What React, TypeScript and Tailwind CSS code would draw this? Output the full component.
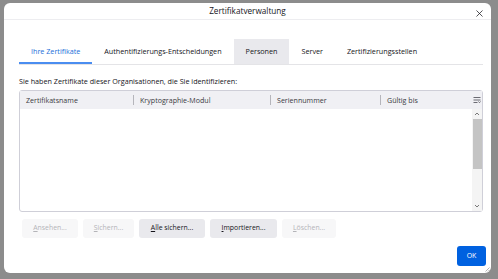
import { X } from "lucide-react";

const tabs = [
  "Ihre Zertifikate",
  "Authentifizierungs-Entscheidungen",
  "Personen",
  "Server",
  "Zertifizierungsstellen",
];

const columns = [
  { label: "Zertifikatsname", w: "w-[113px]" },
  { label: "Kryptographie-Modul", w: "w-[137px]" },
  { label: "Seriennummer", w: "w-[110px]" },
  { label: "Gültig bis", w: "flex-1" },
];

const buttons = [
  { key: "A", rest: "nsehen...", w: "w-[56px]", on: false },
  { key: "S", rest: "ichern...", w: "w-[51px]", on: false },
  { key: "A", rest: "lle sichern...", w: "w-[66px]", on: true },
  { key: "I", rest: "mportieren...", w: "w-[67px]", on: true },
  { key: "L", rest: "öschen...", w: "w-[54px]", on: false },
];

const ColumnPicker = () => (
  <svg width="8" height="8" viewBox="0 0 8 8" fill="none" stroke="#6b6b73" strokeWidth="1">
    <path d="M0.5 1.5h7M0.5 4h7M0.5 6.5h4" />
    <path d="M5.5 5.5l1 1.2 1-1.2" />
  </svg>
);

const App = () => {
  return (
    <div className="flex h-[279px] w-[498px] bg-[#8c8c8c] pb-[6px] pl-[4px] pr-[7px] pt-[3px] font-['Open_Sans',sans-serif] text-[#15141a]">
      <div className="flex flex-1 flex-col rounded-[6px] bg-white">
        <header className="relative flex h-[22px] items-center justify-center border-b border-[#ededf0] pt-[1px]">
          <span className="text-[8.2px]">Zertifikatverwaltung</span>
          <X className="absolute right-[6px] top-[5px] h-[11px] w-[11px]" strokeWidth={1.6} />
        </header>

        <div className="flex flex-1 flex-col pl-[15px] pr-[8px] pt-[19px]">
          <nav className="flex h-[26px] border-b border-[#e4e4e7] text-[7.2px]">
            {tabs.map((t, i) => (
              <div
                key={t}
                className={
                  "flex items-center px-[12px] " +
                  (i === 0
                    ? "border-b-2 border-[#4a8df0] pt-[2px] text-[#1a6fd9]"
                    : i === 2
                      ? "bg-[#e9e9ed]"
                      : "")
                }
              >
                {t}
              </div>
            ))}
          </nav>

          <p className="mt-[11px] text-[7.2px] leading-[10px]">
            Sie haben Zertifikate dieser Organisationen, die Sie identifizieren:
          </p>

          <div className="mt-[4px] flex h-[122px] flex-col rounded-[3px] border border-[#cfcfd8]">
            <div className="flex h-[18px] items-center bg-[#f0f0f4] text-[7.1px] text-[#3b3b3f]">
              {columns.map((c, i) => (
                <div key={c.label} className={"flex h-full items-center " + c.w}>
                  {i > 0 && <span className="mr-[6px] h-[10px] w-px bg-[#b5b5bb]" />}
                  <span className={i === 0 ? "pl-[6px]" : ""}>{c.label}</span>
                </div>
              ))}
              <div className="flex w-[11px] items-center justify-center">
                <ColumnPicker />
              </div>
            </div>
            <div className="flex flex-1">
              <div className="flex-1" />
              <div className="flex w-[10px] flex-col items-center bg-[#f4f4f4]">
                <svg width="6" height="8" viewBox="0 0 6 8" className="mt-[1px]">
                  <path d="M1 5l2-2 2 2" fill="none" stroke="#6b6b6b" strokeWidth="0.9" />
                </svg>
                <div className="mt-[1px] h-[50px] w-[9px] bg-[#c4c4c4]" />
                <div className="flex-1" />
                <svg width="6" height="8" viewBox="0 0 6 8" className="mb-[1px]">
                  <path d="M1 3l2 2 2-2" fill="none" stroke="#6b6b6b" strokeWidth="0.9" />
                </svg>
              </div>
            </div>
          </div>

          <div className="mt-[7px] flex gap-[5px] pl-[3px]">
            {buttons.map((b, i) => (
              <div
                key={i}
                className={
                  "flex h-[19px] items-center justify-center rounded-[3px] text-[6.9px] " +
                  b.w +
                  (b.on ? " bg-[#e9e9ed] text-[#15141a]" : " bg-[#f7f7f8] text-[#b4b4b8]")
                }
              >
                <span>
                  <u>{b.key}</u>
                  {b.rest}
                </span>
              </div>
            ))}
          </div>

          <div className="mt-[8px] flex justify-end">
            <div className="-mr-[3px] flex h-[20px] w-[29px] items-center justify-center rounded-[3px] bg-[#0061e0] text-[7px] text-white">
              OK
            </div>
          </div>
          <div className="flex flex-1 justify-end">
            <svg width="6" height="6" viewBox="0 0 6 6" className="-mr-[7px] mb-[1px] mt-auto">
              <path d="M5.5 1.5L1.5 5.5M5.5 4L4 5.5" stroke="#a0a0a0" strokeWidth="0.8" />
            </svg>
          </div>
        </div>
      </div>
    </div>
  );
};

export default App;
